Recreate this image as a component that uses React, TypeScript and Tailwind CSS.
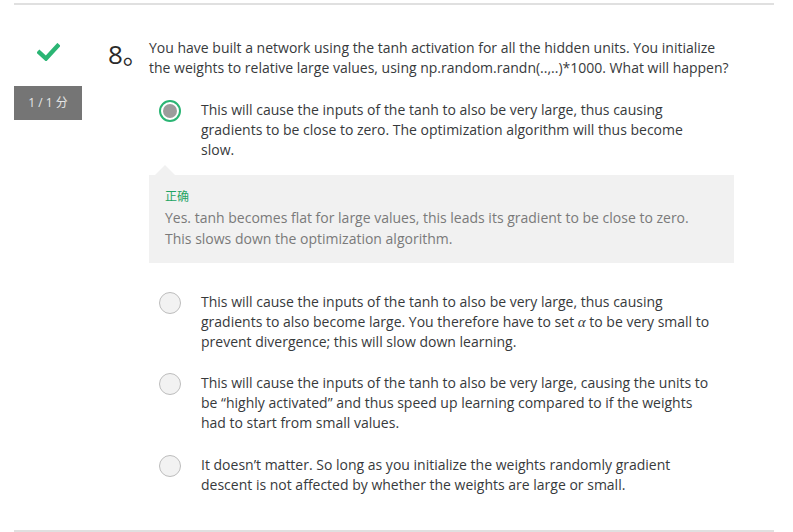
import React from "react";

const font = { fontFamily: '"Open Sans", "Noto Sans CJK SC", sans-serif' };

function Radio({ selected }: { selected?: boolean }) {
  if (selected) {
    return (
      <div className="w-[22px] h-[22px] rounded-full border-[2.5px] border-[#2bb574] bg-white flex items-center justify-center shrink-0">
        <div className="w-[14px] h-[14px] rounded-full bg-[#9c9c9c]" />
      </div>
    );
  }
  return <div className="w-[22px] h-[22px] rounded-full border border-[#bdbdbd] bg-[#f2f2f2] shrink-0" />;
}

function Option({ selected, children }: { selected?: boolean; children: React.ReactNode }) {
  return (
    <div className="flex items-start">
      <div className="w-[52px] pl-[10px] shrink-0">
        <Radio selected={selected} />
      </div>
      <div className="text-[14px] leading-[20px] text-[#373a3c] w-[518px]">{children}</div>
    </div>
  );
}

export default function App() {
  return (
    <div className="w-[793px] h-[532px] bg-white overflow-hidden" style={font}>
      <div className="ml-[14px] w-[760px] h-[2px] bg-[#e0e0e0] mt-[3px]" />
      <div className="ml-[14px] w-[760px] flex pt-[33px] h-[525px]">
        <div className="w-[68px] shrink-0 flex flex-col items-center">
          <svg width="23" height="18" viewBox="0 0 23 18" className="mt-[5px]">
            <path d="M2.5 9.5 L9 15.5 L20.5 3" fill="none" stroke="#2bb574" strokeWidth="4.4" strokeLinecap="square" strokeLinejoin="miter" />
          </svg>
          <div className="mt-[25px] w-[68px] h-[34px] bg-[#757575] text-[#e6e6e6] text-[12px] flex items-center justify-center">
            1 / 1 分
          </div>
        </div>
        <div className="w-[26px] shrink-0" />
        <div className="w-[41px] shrink-0 text-[26px] leading-[26px] text-[#2a2a2a] mt-[3px]">8。</div>
        <div className="w-[585px] shrink-0 flex flex-col">
          <div className="text-[14px] leading-[20px] text-[#373a3c]">
            You have built a network using the tanh activation for all the hidden units. You initialize the weights to relative large values, using np.random.randn(..,..)*1000. What will happen?
          </div>
          <div className="mt-[22px]">
            <Option selected>
              This will cause the inputs of the tanh to also be very large, thus causing gradients to be close to zero. The optimization algorithm will thus become slow.
            </Option>
          </div>
          <div className="relative mt-[15px] bg-[#f1f1f1] px-[16px] pt-[12px] pb-[14px] text-[14px]">
            <div className="absolute left-[6px] top-[-10px] w-0 h-0 border-l-[10px] border-r-[10px] border-b-[10px] border-l-transparent border-r-transparent border-b-[#f1f1f1]" />
            <div className="text-[#1fa463] text-[12px] leading-[20px]">正确</div>
            <div className="text-[#7a7a7a] leading-[21px]">
              Yes. tanh becomes flat for large values, this leads its gradient to be close to zero. This slows down the optimization algorithm.
            </div>
          </div>
          <div className="mt-[29px]">
            <Option>
              This will cause the inputs of the tanh to also be very large, thus causing gradients to also become large. You therefore have to set{" "}
              <span className="italic leading-none" style={{ fontFamily: '"Liberation Serif", serif', fontSize: 15 }}>α</span> to be very small to prevent divergence; this will slow down learning.
            </Option>
          </div>
          <div className="mt-[21px]">
            <Option>
              This will cause the inputs of the tanh to also be very large, causing the units to be “highly activated” and thus speed up learning compared to if the weights had to start from small values.
            </Option>
          </div>
          <div className="mt-[22px]">
            <Option>
              It doesn’t matter. So long as you initialize the weights randomly gradient descent is not affected by whether the weights are large or small.
            </Option>
          </div>
        </div>
      </div>
      <div className="ml-[14px] w-[760px] h-[2px] bg-[#e0e0e0]" />
    </div>
  );
}
